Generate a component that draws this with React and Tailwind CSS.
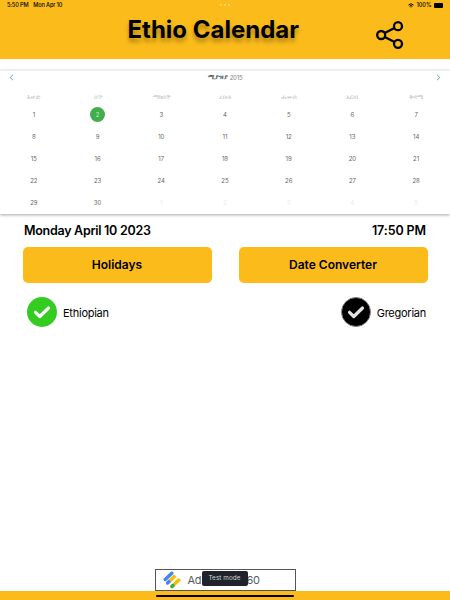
import React from 'react';

const weekdays = ['እሁድ', 'ሰኞ', 'ማክሰኞ', 'ረቡዕ', 'ሐሙስ', 'አርብ', 'ቅዳሜ'];
const days = Array.from({ length: 35 }, (_, i) => i + 1);
const monthLength = 30;
const today = 2;

const StatusBar = () => (
  <div className="relative flex h-[11px] items-center justify-between pl-[7px] pr-[7px] text-[5.6px] font-medium leading-none">
    <div className="flex gap-[5px] tracking-[-0.15px]">
      <span>5:50 PM</span>
      <span>Mon Apr 10</span>
    </div>
    <div className="absolute left-1/2 top-[4px] flex -translate-x-1/2 gap-[2px]">
      <i className="size-[2px] rounded-full bg-[#fddc86]" />
      <i className="size-[2px] rounded-full bg-[#fddc86]" />
      <i className="size-[2px] rounded-full bg-[#fddc86]" />
    </div>
    <div className="flex items-center gap-[2px]">
      <svg width="6" height="5" viewBox="0 0 12 10" fill="none" stroke="black" strokeWidth="2">
        <path d="M1 4a7 7 0 0 1 10 0M3 6.5a4.2 4.2 0 0 1 6 0" />
        <path d="M6 9.5 4.5 7.7h3z" fill="black" stroke="none" />
      </svg>
      <span>100%</span>
      <span className="h-[4.5px] w-[9.5px] rounded-[1px] bg-black" />
    </div>
  </div>
);

const Share = () => (
  <svg className="ml-auto mr-[46px]" width="28" height="30" viewBox="0 0 28 30" fill="none" stroke="black" strokeWidth="2.3">
    <circle cx="5.2" cy="15" r="4" />
    <circle cx="22" cy="6.2" r="4" />
    <circle cx="22" cy="23.8" r="4" />
    <path d="m8.7 13.1 9.8-5.1M8.7 16.9l9.8 5.1" />
  </svg>
);

const Header = () => (
  <header className="h-[58.5px] bg-[#fbbc1b]">
    <StatusBar />
    <div className="relative flex h-[47px] items-center">
      <h1 className="absolute left-[127.5px] top-[2px] whitespace-nowrap text-[24px] font-bold leading-[34px] [text-shadow:0px_4px_4px_rgba(0,0,0,0.3)]">
        Ethio Calendar
      </h1>
      <Share />
    </div>
  </header>
);

const Calendar = () => (
  <section className="mt-[11px] h-[144.5px] border-t border-[#eeeeee] bg-white px-[2px] text-[6px] text-[#666] shadow-[0_1px_3px_rgba(0,0,0,0.35)]">
    <div className="flex h-[14px] items-center justify-between px-[7px]">
      <svg width="5" height="7" viewBox="0 0 5 7" fill="none" stroke="#3fa58c" strokeWidth="0.9">
        <path d="M4 .8 1.2 3.5 4 6.2" />
      </svg>
      <div className="flex gap-[2px]">
        <span className="text-[6.3px] font-bold text-[#43515c]">ሚያዝያ</span>
        <span className="tracking-[-0.2px] text-[#7b858d]">2015</span>
      </div>
      <svg width="5" height="7" viewBox="0 0 5 7" fill="none" stroke="#3fa58c" strokeWidth="0.9">
        <path d="M1 .8 3.8 3.5 1 6.2" />
      </svg>
    </div>
    <div className="mt-[7.5px] grid h-[11px] grid-cols-7 items-center text-center text-[6.3px] text-[#b6b6b6]">
      {weekdays.map((day, i) => (
        <span key={day} className={i === 1 ? 'text-[#a9cfb6]' : ''}>{day}</span>
      ))}
    </div>
    <div className="mt-[0.5px] grid auto-rows-[22px] grid-cols-7 place-items-center">
      {days.map((d) => {
        if (d === today) {
          return (
            <span key={d} className="flex size-[14.5px] items-center justify-center rounded-full bg-[#41ae4b] text-[#c9e9cc]">
              {d}
            </span>
          );
        }
        if (d > monthLength) {
          return <span key={d} className="text-[#ececec]">{d - monthLength}</span>;
        }
        return <span key={d}>{d}</span>;
      })}
    </div>
  </section>
);

const Check = ({ className }) => (
  <span className={`flex size-[30px] items-center justify-center rounded-full ${className}`}>
    <svg width="18" height="14" viewBox="0 0 18 14" fill="none" stroke="currentColor" strokeWidth="3.2" strokeLinecap="round" strokeLinejoin="round">
      <path d="m2.5 7.3 4.3 4.2 8.7-8.5" />
    </svg>
  </span>
);

const AdBanner = () => (
  <div className="relative mx-auto flex h-[22px] w-[141px] items-center border border-[#555] bg-white text-[11px] text-[#555b62]">
    <svg className="ml-[7px]" width="18" height="18" viewBox="0 0 18 18" fill="none" strokeWidth="3.4" strokeLinecap="round">
      <path d="M2.2 8.5 8.8 2.2" stroke="#4285f4" />
      <path d="m4.5 12 2.2-2.1" stroke="#4285f4" />
      <path d="m6.9 9.7 5.4-5.2" stroke="#fbbc04" strokeLinecap="butt" />
      <path d="m9 15.5 6.8-6.5" stroke="#fbbc04" />
      <path d="m9 15.5 1-1" stroke="#34a853" />
    </svg>
    <span className="ml-[7px] tracking-[-0.3px]">Ad</span>
    <span className="ml-auto mr-[35px] tracking-[-0.4px]">60</span>
    <span className="absolute left-[46px] top-[1px] flex h-[15px] w-[46px] items-center justify-center rounded-[2px] bg-[#20242a] pt-px text-[6.3px] tracking-[0.1px] text-[#d5d8dc]">
      Test mode
    </span>
  </div>
);

export default function App() {
  return (
    <div className="flex h-[600px] w-[450px] flex-col overflow-hidden bg-white font-['Inter','Noto_Sans',sans-serif] text-black">
      <Header />
      <Calendar />
      <div className="flex justify-between px-[24px] pt-[7px] text-[12.5px] font-semibold leading-[20px]">
        <span className="tracking-[-0.28px]">Monday April 10 2023</span>
        <span className="tracking-[-0.1px]">17:50 PM</span>
      </div>
      <div className="mt-[5.5px] grid grid-cols-2 gap-[27px] px-[22.5px]">
        <button className="h-[36px] rounded-[5px] bg-[#fbbc1b] text-[12px] font-semibold">Holidays</button>
        <button className="h-[36px] rounded-[5px] bg-[#fbbc1b] text-[12px] font-semibold">Date Converter</button>
      </div>
      <div className="mt-[14.8px] flex justify-between pl-[27px] pr-[24px] text-[11px] tracking-[-0.25px]">
        <div className="flex items-center gap-[6px]">
          <Check className="bg-[#35cc22] text-white" />
          <span className="pt-px">Ethiopian</span>
        </div>
        <div className="flex items-center gap-[6px]">
          <Check className="border border-[#888] bg-black text-[#e2e2e2]" />
          <span className="pt-px">Gregorian</span>
        </div>
      </div>
      <div className="mt-auto">
        <AdBanner />
        <div className="flex h-[9px] items-center justify-center bg-[#fbbc1b]">
          <span className="h-[2px] w-[138px] rounded-full bg-black" />
        </div>
      </div>
    </div>
  );
}
